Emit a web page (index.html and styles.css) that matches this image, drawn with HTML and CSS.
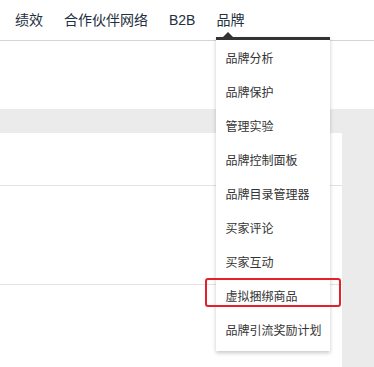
FILE: index.html
```html
<!DOCTYPE html>
<html lang="zh-CN">
<head>
  <meta charset="UTF-8">
  <title>品牌</title>
  <link rel="stylesheet" href="styles.css">
</head>
<body>

  <div class="topnav">
    <span class="nav-item">绩效</span>
    <span class="nav-item">合作伙伴网络</span>
    <span class="nav-item">B2B</span>
    <span class="nav-item active">品牌
      <div class="dropdown">
        <div class="menu-item">品牌分析</div>
        <div class="menu-item">品牌保护</div>
        <div class="menu-item">管理实验</div>
        <div class="menu-item">品牌控制面板</div>
        <div class="menu-item">品牌目录管理器</div>
        <div class="menu-item">买家评论</div>
        <div class="menu-item">买家互动</div>
        <div class="menu-item marked">虚拟捆绑商品</div>
        <div class="menu-item">品牌引流奖励计划</div>
      </div>
    </span>
  </div>

  <div class="subheader"></div>

  <div class="page">
    <div class="band"></div>
    <div class="content">
      <div class="card">
        <div class="row row-top"></div>
        <div class="row row-mid"></div>
        <div class="row"></div>
      </div>
      <div class="side"></div>
    </div>
  </div>

</body>
</html>
```

FILE: styles.css
```css
body {
  margin: 0;
  font-family: "Liberation Sans", "Noto Sans CJK SC", sans-serif;
  background: #fff;
  color: #333;
}

.topnav {
  height: 40px;
  display: flex;
  align-items: center;
  gap: 21px;
  padding-left: 15px;
  border-bottom: 1px solid #d5d5d5;
  font-size: 14px;
  color: #232f3e;
}

.nav-item {
  position: relative;
  line-height: 20px;
  margin-top: -1px;
}

.dropdown {
  position: absolute;
  left: 0;
  top: 27px;
  width: 114px;
  background: #fff;
  border-top: 3px solid #333;
  box-shadow: 0 2px 4px rgba(0,0,0,0.22);
  padding: 2px 0 3px;
  z-index: 5;
}

.dropdown::before {
  content: "";
  position: absolute;
  left: 7px;
  top: -8px;
  border-left: 5px solid transparent;
  border-right: 5px solid transparent;
  border-bottom: 5px solid #333;
}

.menu-item {
  position: relative;
  height: 34px;
  line-height: 34px;
  padding-left: 9px;
  font-size: 12px;
  color: #333;
  white-space: nowrap;
}

.marked::after {
  content: "";
  position: absolute;
  left: -11px;
  right: -11px;
  top: -2px;
  height: 25px;
  border: 2px solid #e3212a;
  border-radius: 3px;
}

.subheader {
  height: 68px;
  background: #fff;
}

.page {
  background: #ebebeb;
}

.band {
  height: 24px;
}

.content {
  display: flex;
  height: 234px;
}

.card {
  width: 342px;
  background: #fff;
}

.row {
  border-bottom: 1px solid #e3e3e3;
}

.row-top {
  height: 52px;
}

.row-mid {
  height: 98px;
}

.row:last-child {
  border-bottom: none;
}

.side {
  flex: 1;
}
```
